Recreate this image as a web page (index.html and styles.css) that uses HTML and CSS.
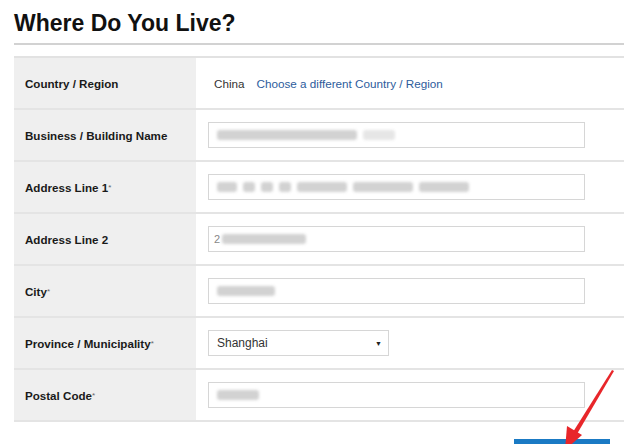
FILE: index.html
```html
<!DOCTYPE html>
<html>
<head>
  <title>Where Do You Live?</title>
  <meta name="viewport" content="width=device-width, initial-scale=1.0" />
  <link rel="stylesheet" href="styles.css">
</head>
<body>
  <h2 class="title">Where Do You Live?</h2>

  <div class="form">
    <div class="row">
      <div class="label">Country / Region</div>
      <div class="field text-field">
        <span class="country">China</span>
        <a class="change" href="#">Choose a different Country / Region</a>
      </div>
    </div>

    <div class="row">
      <div class="label">Business / Building Name</div>
      <div class="field">
        <div class="input">
          <span class="blur" style="width: 140px"></span>
          <span class="blur light" style="width: 32px"></span>
        </div>
      </div>
    </div>

    <div class="row">
      <div class="label">Address Line 1<sup>*</sup></div>
      <div class="field">
        <div class="input">
          <span class="blur" style="width: 20px"></span>
          <span class="blur" style="width: 12px"></span>
          <span class="blur" style="width: 12px"></span>
          <span class="blur" style="width: 12px"></span>
          <span class="blur" style="width: 50px"></span>
          <span class="blur" style="width: 60px"></span>
          <span class="blur" style="width: 50px"></span>
        </div>
      </div>
    </div>

    <div class="row">
      <div class="label">Address Line 2</div>
      <div class="field">
        <div class="input">
          <span class="digit">2</span>
          <span class="blur" style="width: 84px"></span>
        </div>
      </div>
    </div>

    <div class="row">
      <div class="label">City<sup>*</sup></div>
      <div class="field">
        <div class="input">
          <span class="blur" style="width: 58px"></span>
        </div>
      </div>
    </div>

    <div class="row">
      <div class="label">Province / Municipality<sup>*</sup></div>
      <div class="field">
        <div class="select">
          <span>Shanghai</span>
          <span class="caret">&#9660;</span>
        </div>
      </div>
    </div>

    <div class="row">
      <div class="label">Postal Code<sup>*</sup></div>
      <div class="field">
        <div class="input">
          <span class="blur" style="width: 42px"></span>
        </div>
      </div>
    </div>
  </div>

  <div class="actions">
    <button class="next" aria-label="Next"></button>
  </div>

  <svg class="arrow" width="80" height="90" viewBox="0 0 80 90">
    <polygon points="64,6 66,7 29,70 25,68" fill="#e8262a" />
    <polygon points="17,86 19,62 34,71" fill="#e8262a" />
  </svg>
</body>
</html>
```

FILE: styles.css
```css
body { font-family: "Liberation Sans", Arial, sans-serif; background: #fff; color: #222; margin: 0; padding: 0 16px 0 14px; position: relative; }

.title { font-size: 23px; line-height: 26px; font-weight: bold; color: #111; margin: 0; padding: 10px 0 7px; border-bottom: 2px solid #d2d2d2; }

.form { margin-top: 11px; border-top: 2px solid #e2e2e2; }
.row { display: flex; height: 52px; box-sizing: border-box; border-bottom: 2px solid #e4e4e4; }
.label { width: 182px; background: #efefef; display: flex; align-items: center; padding-left: 11px; box-sizing: border-box; font-size: 11.6px; font-weight: bold; color: #1a1a1a; }
.label sup { font-size: 8px; font-weight: normal; color: #666; vertical-align: 3px; }
.field { flex: 1; display: flex; align-items: center; padding-left: 12px; }
.text-field { font-size: 11.7px; padding-left: 18px; }
.country { color: #333; margin-right: 12px; }
.change { color: #2d5c9c; text-decoration: none; }

.input { width: 377px; height: 26px; border: 1px solid #d6d6d6; display: flex; align-items: center; gap: 6px; padding-left: 8px; box-sizing: border-box; }
.blur { height: 10px; background: #d2d2d2; border-radius: 3px; filter: blur(1.5px); }
.blur.light { background: #e6e6e6; }
.digit { font-size: 11px; color: #888; margin-left: -3px; margin-right: -4px; }

.select { width: 181px; height: 26px; border: 1px solid #d6d6d6; display: flex; align-items: center; justify-content: space-between; padding: 0 6px 0 8px; box-sizing: border-box; font-size: 12px; color: #333; }
.caret { font-size: 7px; color: #222; }

.actions { display: flex; justify-content: flex-end; padding: 17px 14px 0 0; }
.next { width: 96px; height: 30px; background: #1a7ac4; border: none; }

.arrow { position: absolute; left: 548px; top: 364px; }
```
